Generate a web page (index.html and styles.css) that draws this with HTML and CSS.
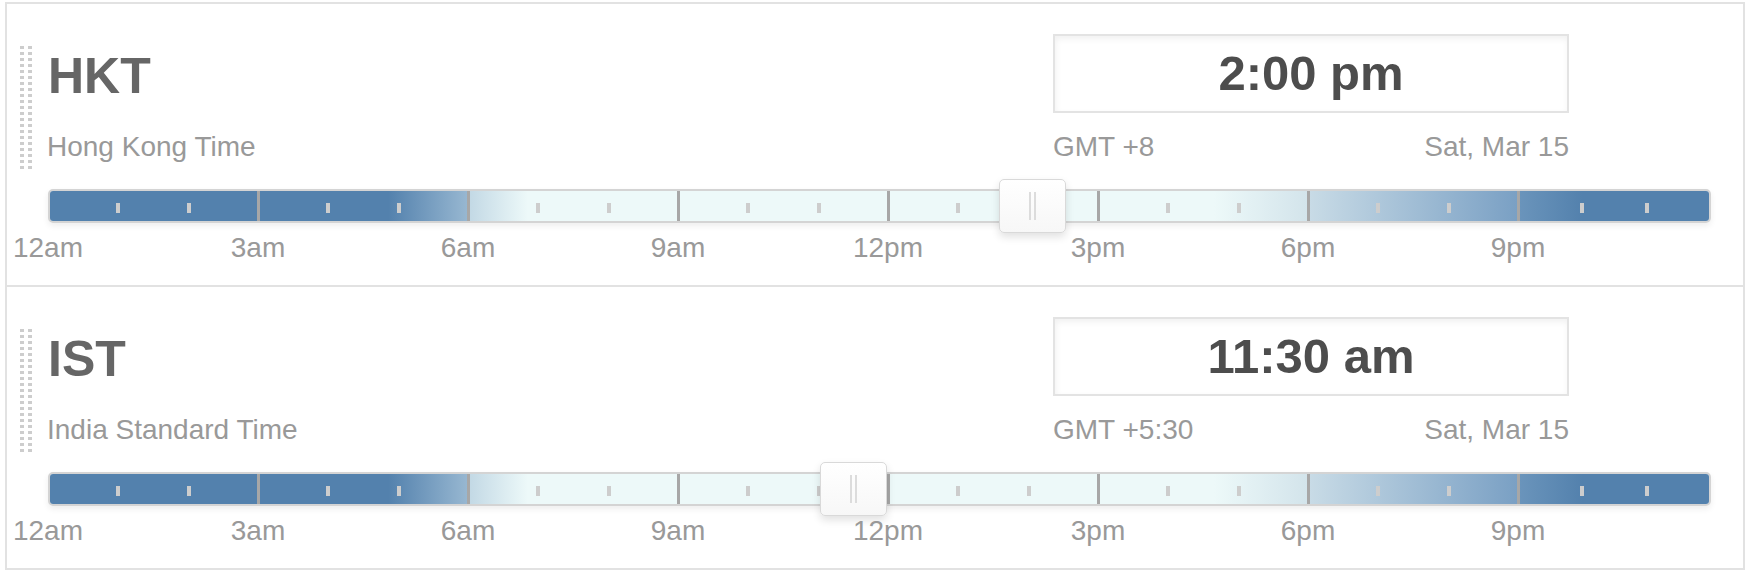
FILE: index.html
```html
<!DOCTYPE html>
<html lang="en">

<head>
    <meta charset="UTF-8">
    <meta name="viewport" content="width=device-width, initial-scale=1.0">
    <title>Zonas horarias</title>
    <link rel="stylesheet" href="styles.css">
</head>

<body>
    <div class="zonas">
        <div class="zona">
            <div class="grip"></div>
            <div class="zonaMain">
                <div class="zonaHead">
                    <div class="nombres">
                        <h2 class="abrev">HKT</h2>
                        <div class="nombre">Hong Kong Time</div>
                    </div>
                    <div class="reloj">
                        <div class="hora">2:00 pm</div>
                        <div class="meta"><span>GMT +8</span><span>Sat, Mar 15</span></div>
                    </div>
                </div>
                <div class="track">
                    <div class="seg noche"><i></i><i></i></div>
                    <div class="seg alba1"><i></i><i></i></div>
                    <div class="seg alba2"><i></i><i></i></div>
                    <div class="seg dia"><i></i><i></i></div>
                    <div class="seg dia"><i></i><i></i></div>
                    <div class="seg tarde1"><i></i><i></i></div>
                    <div class="seg tarde2"><i></i><i></i></div>
                    <div class="seg tarde3"><i></i><i></i></div>
                    <div class="thumb" style="left: 949px"><span></span></div>
                </div>
                <div class="horas">
                    <span>12am</span><span>3am</span><span>6am</span><span>9am</span>
                    <span>12pm</span><span>3pm</span><span>6pm</span><span>9pm</span>
                </div>
            </div>
        </div>

        <div class="zona">
            <div class="grip"></div>
            <div class="zonaMain">
                <div class="zonaHead">
                    <div class="nombres">
                        <h2 class="abrev">IST</h2>
                        <div class="nombre">India Standard Time</div>
                    </div>
                    <div class="reloj">
                        <div class="hora">11:30 am</div>
                        <div class="meta"><span>GMT +5:30</span><span>Sat, Mar 15</span></div>
                    </div>
                </div>
                <div class="track">
                    <div class="seg noche"><i></i><i></i></div>
                    <div class="seg alba1"><i></i><i></i></div>
                    <div class="seg alba2"><i></i><i></i></div>
                    <div class="seg dia"><i></i><i></i></div>
                    <div class="seg dia"><i></i><i></i></div>
                    <div class="seg tarde1"><i></i><i></i></div>
                    <div class="seg tarde2"><i></i><i></i></div>
                    <div class="seg tarde3"><i></i><i></i></div>
                    <div class="thumb" style="left: 770px"><span></span></div>
                </div>
                <div class="horas">
                    <span>12am</span><span>3am</span><span>6am</span><span>9am</span>
                    <span>12pm</span><span>3pm</span><span>6pm</span><span>9pm</span>
                </div>
            </div>
        </div>
    </div>
</body>

</html>
```

FILE: styles.css
```css
body {
    margin: 0;
    background: white;
    font-family: "Liberation Sans", Arial, Helvetica, sans-serif;
}

.zonas {
    margin: 2px 1px 0 5px;
    border: 2px solid #e2e2e2;
    border-bottom: none;
}

.zona {
    display: flex;
    height: 281px;
    padding-left: 13px;
    border-bottom: 2px solid #e2e2e2;
}

.grip {
    width: 12px;
    height: 125px;
    margin-top: 42px;
    margin-right: 13px;
    background:
        repeating-linear-gradient(to bottom, #cdcdcd 0 3px, transparent 3px 6px) left top / 4px 100% no-repeat,
        repeating-linear-gradient(to bottom, #cdcdcd 0 3px, transparent 3px 6px) right top / 4px 100% no-repeat;
}

.zonaMain {
    flex: 1;
}

.zonaHead {
    display: flex;
    justify-content: space-between;
    align-items: flex-start;
}

.nombres {
    padding: 44px 0 0 2px;
}

.abrev {
    margin: 0 0 0 1px;
    font-size: 50px;
    line-height: 56px;
    font-weight: bold;
    color: #666;
}

.nombre {
    margin-top: 27px;
    font-size: 28px;
    line-height: 32px;
    color: #999;
}

.reloj {
    width: 516px;
    margin-right: 174px;
    padding-top: 30px;
}

.hora {
    height: 75px;
    border: 2px solid #e3e3e3;
    box-shadow: inset 1px 3px 6px rgba(0, 0, 0, 0.06);
    text-align: center;
    font-size: 49px;
    line-height: 75px;
    font-weight: bold;
    color: #4d4d4d;
}

.meta {
    display: flex;
    justify-content: space-between;
    margin-top: 18px;
    font-size: 28px;
    line-height: 32px;
    color: #999;
}

.track {
    position: relative;
    display: grid;
    grid-template-columns: 207px repeat(6, 210px) 1fr;
    height: 30px;
    margin: 26px 32px 0 3px;
    border: 2px solid #d4d4d4;
    border-radius: 5px;
    box-shadow: 0 3px 6px rgba(0, 0, 0, 0.07);
}

.seg {
    display: flex;
    justify-content: space-evenly;
    align-items: center;
}

.seg + .seg {
    border-left: 3px solid #a7a7a7;
}

.seg i {
    width: 4px;
    height: 10px;
    margin-top: 4px;
    background: #cdcdcd;
}

.seg:first-child {
    border-radius: 3px 0 0 3px;
}

.seg:nth-child(8) {
    border-radius: 0 3px 3px 0;
}

.noche {
    background: #5381ad;
}

.alba1 {
    background: linear-gradient(to right, #5381ad 62%, #97b7d1 100%);
}

.alba2 {
    background: linear-gradient(to right, #c3d9e5 0%, #edf9f9 28%);
}

.dia {
    background: #edf9f9;
}

.tarde1 {
    background: linear-gradient(to right, #edf9f9 55%, #d3e4eb 100%);
}

.tarde2 {
    background: linear-gradient(to right, #c8dbe6, #7aa0c4);
}

.tarde3 {
    background: linear-gradient(to right, #6a94bb, #5381ad 33%);
}

.thumb {
    position: absolute;
    top: -12px;
    width: 65px;
    height: 52px;
    border: 1px solid #d9d9d9;
    border-radius: 5px;
    background: linear-gradient(#fff, #f7f7f7);
    box-shadow: 0 4px 8px rgba(0, 0, 0, 0.12);
    display: flex;
    justify-content: center;
    align-items: center;
}

.thumb span {
    width: 3px;
    height: 28px;
    border-left: 2px solid #dcdcdc;
    border-right: 2px solid #dcdcdc;
}

.horas {
    display: grid;
    grid-template-columns: repeat(8, 210px);
    margin: 9px 0 0 3px;
    font-size: 28px;
    line-height: 32px;
    color: #999;
}

.horas span {
    justify-self: start;
    transform: translateX(-50%);
}
```
